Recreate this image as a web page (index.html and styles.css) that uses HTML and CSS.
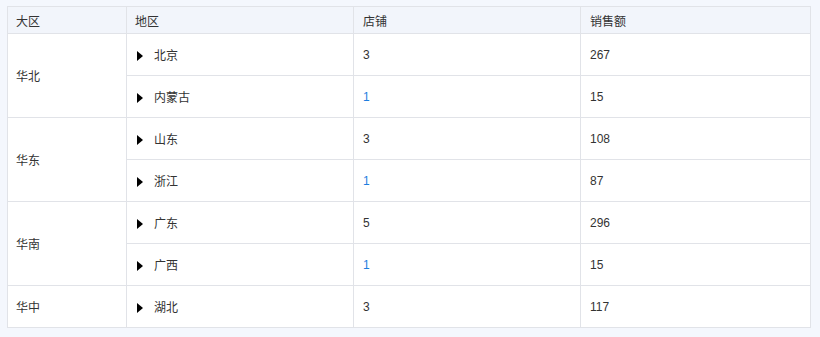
FILE: index.html
```html
<!DOCTYPE html>
<html lang="zh">
<head>
<meta charset="utf-8">
<link rel="stylesheet" href="styles.css">
</head>
<body>
<div class="wrap">
<table class="grid">
  <colgroup>
    <col class="c1"><col class="c2"><col class="c3"><col class="c4">
  </colgroup>
  <thead>
    <tr><th>大区</th><th>地区</th><th>店铺</th><th>销售额</th></tr>
  </thead>
  <tbody>
    <tr><td rowspan="2">华北</td><td><span class="tri"></span>北京</td><td>3</td><td>267</td></tr>
    <tr><td><span class="tri"></span>内蒙古</td><td class="blue">1</td><td>15</td></tr>
    <tr><td rowspan="2">华东</td><td><span class="tri"></span>山东</td><td>3</td><td>108</td></tr>
    <tr><td><span class="tri"></span>浙江</td><td class="blue">1</td><td>87</td></tr>
    <tr><td rowspan="2">华南</td><td><span class="tri"></span>广东</td><td>5</td><td>296</td></tr>
    <tr><td><span class="tri"></span>广西</td><td class="blue">1</td><td>15</td></tr>
    <tr><td>华中</td><td><span class="tri"></span>湖北</td><td>3</td><td>117</td></tr>
  </tbody>
</table>
</div>
</body>
</html>
```
FILE: styles.css
```css
html, body {
  margin: 0;
  padding: 0;
  background: #f4f7fd;
}
.wrap {
  padding: 6px 0 0 7px;
}
.grid {
  width: 803px;
  border-collapse: collapse;
  table-layout: fixed;
  background: #ffffff;
  font-family: "Liberation Sans", "Noto Sans CJK SC", sans-serif;
  font-size: 12px;
  color: #333333;
}
.c1 { width: 119px; }
.c2 { width: 227px; }
.c3 { width: 227px; }
.c4 { width: 230px; }
.grid th, .grid td {
  border: 1px solid #e1e3e8;
  padding: 0 8px;
  text-align: left;
  font-weight: normal;
  vertical-align: middle;
}
.grid th {
  background: #f2f5fb;
  height: 26px;
}
.grid td {
  height: 41px;
}
.grid td:nth-last-child(2), .grid th:nth-child(3),
.grid td:last-child, .grid th:last-child {
  padding-left: 9px;
}
.tri {
  display: inline-block;
  width: 0;
  height: 0;
  border-top: 5px solid transparent;
  border-bottom: 5px solid transparent;
  border-left: 6px solid #000000;
  margin: 0 11px 0 2px;
  vertical-align: -1px;
}
.blue {
  color: #1d7ee0;
}
```
